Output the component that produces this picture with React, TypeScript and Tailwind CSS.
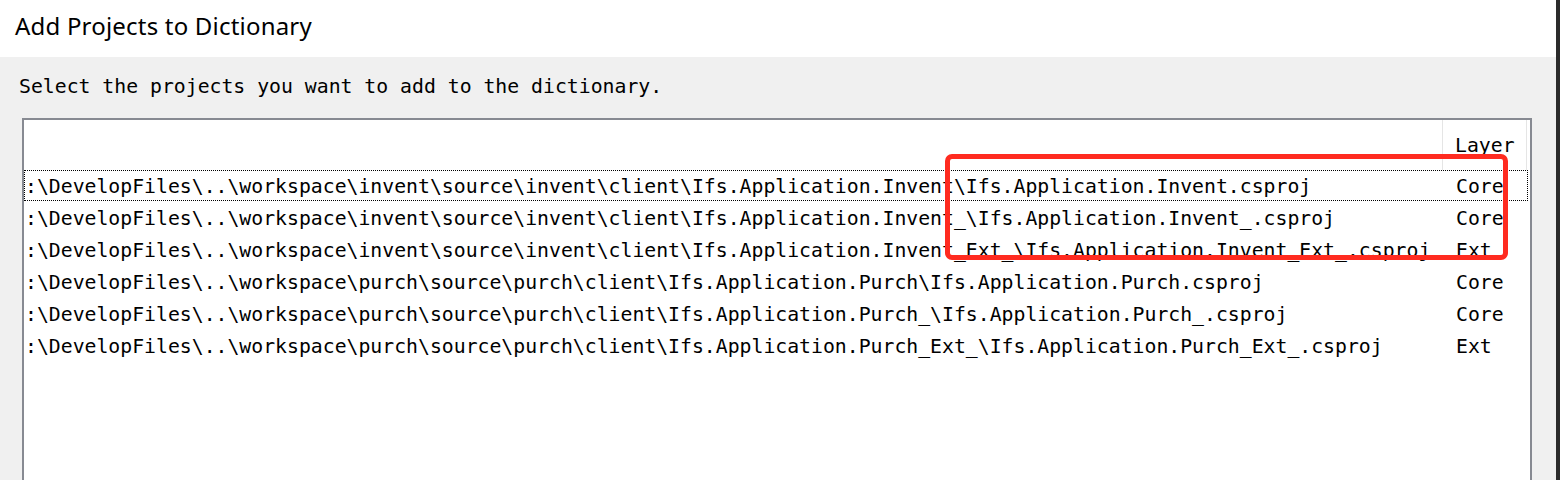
const rows = [
  {
    path: ":\\DevelopFiles\\..\\workspace\\invent\\source\\invent\\client\\Ifs.Application.Invent\\Ifs.Application.Invent.csproj",
    layer: "Core",
  },
  {
    path: ":\\DevelopFiles\\..\\workspace\\invent\\source\\invent\\client\\Ifs.Application.Invent_\\Ifs.Application.Invent_.csproj",
    layer: "Core",
  },
  {
    path: ":\\DevelopFiles\\..\\workspace\\invent\\source\\invent\\client\\Ifs.Application.Invent_Ext_\\Ifs.Application.Invent_Ext_.csproj",
    layer: "Ext",
  },
  {
    path: ":\\DevelopFiles\\..\\workspace\\purch\\source\\purch\\client\\Ifs.Application.Purch\\Ifs.Application.Purch.csproj",
    layer: "Core",
  },
  {
    path: ":\\DevelopFiles\\..\\workspace\\purch\\source\\purch\\client\\Ifs.Application.Purch_\\Ifs.Application.Purch_.csproj",
    layer: "Core",
  },
  {
    path: ":\\DevelopFiles\\..\\workspace\\purch\\source\\purch\\client\\Ifs.Application.Purch_Ext_\\Ifs.Application.Purch_Ext_.csproj",
    layer: "Ext",
  },
];

const mono = "font-['DejaVu_Sans_Mono',monospace] text-[19.8px] leading-[24px] text-black";

export default function App() {
  return (
    <div className="w-[1560px] h-[480px] flex bg-[#2b2b2b] overflow-hidden">
      <div className="w-[1556px] flex flex-col">
        {/* Title bar */}
        <div className="h-[57px] shrink-0 bg-white flex items-center pl-[15px] pb-[5px] font-['Noto_Sans',sans-serif] text-[24px] tracking-[0.2px] text-black">
          Add Projects to Dictionary
        </div>

        {/* Body */}
        <div className="flex-1 bg-[#f0f0f0] flex flex-col min-h-0">
          <div className={`${mono} pl-[19px] pt-[18px] h-[61px] shrink-0 whitespace-pre`}>
            Select the projects you want to add to the dictionary.
          </div>

          <div className="relative ml-[22px] w-[1510px] flex-1 bg-white border-2 border-b-0 border-[#878a92]">
            {/* Header */}
            <div className="flex h-[50px]">
              <div className="w-[1419px] border-r border-[#e5e5e5]" />
              <div className={`${mono} w-[84px] pl-[12px] pt-[2px] flex items-center border-r border-[#e5e5e5]`}>
                Layer
              </div>
            </div>

            {/* Rows */}
            {rows.map((row, i) => (
              <div key={i} className="relative flex h-[32px] items-center pt-[1px]">
                <div className={`${mono} w-[1420px] pl-[1px] overflow-hidden whitespace-pre`}>
                  {row.path}
                </div>
                <div className={`${mono} pl-[12px]`}>{row.layer}</div>
                {i === 0 && (
                  <div className="absolute left-0 top-0 w-[1504px] h-[31px] border border-dotted border-black" />
                )}
              </div>
            ))}

            {/* Annotation */}
            <div className="absolute left-[921px] top-[34px] w-[563px] h-[106px] border-[5px] border-[#ff2b20] rounded-[7px]" />
          </div>
        </div>
      </div>
    </div>
  );
}
